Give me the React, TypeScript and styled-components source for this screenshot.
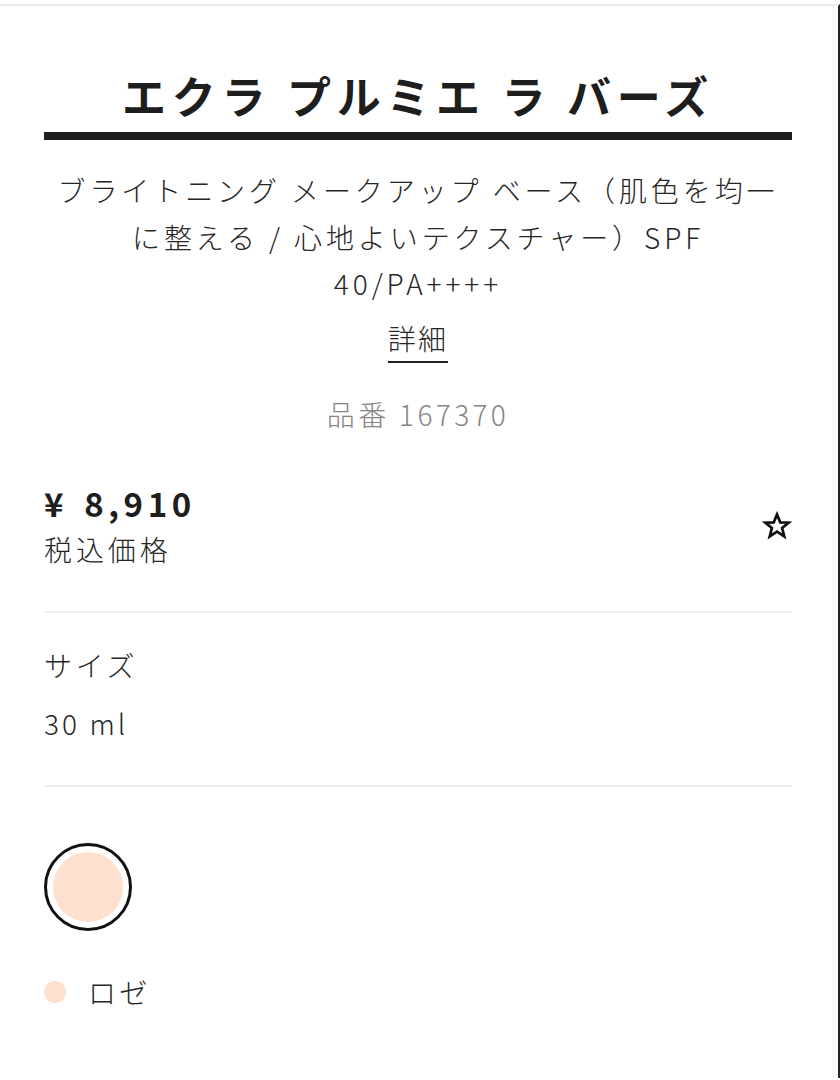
import React from "react";
import styled, {createGlobalStyle} from "styled-components";

const GlobalStyle = createGlobalStyle`
html, body {
margin: 0;
padding: 0;
background: #fff;
}
body {
font-family: "Noto Sans CJK JP", "Noto Sans", sans-serif;
color: #333;
}
`;

const product = {
    name: "エクラ プルミエ ラ バーズ",
    description: "ブライトニング メークアップ ベース（肌色を均一に整える / 心地よいテクスチャー）SPF 40/PA++++",
    code: "167370",
    price: "¥ 8,910",
    size: "30 ml",
    shade: {name: "ロゼ", color: "#fde0ce"},
};

const App: React.FC = () => {
    return <>
        <GlobalStyle/>
        <Page>
            <Sheet>
                <Title>{product.name}</Title>
                <Bar/>
                <Description>{product.description}</Description>
                <DetailRow>
                    <DetailLink href="#">詳細</DetailLink>
                </DetailRow>
                <Code>品番 {product.code}</Code>

                <PriceRow>
                    <div>
                        <Price>{product.price}</Price>
                        <TaxNote>税込価格</TaxNote>
                    </div>
                    <FavButton aria-label="お気に入り">
                        <svg width="30" height="30" viewBox="0 0 24 24" fill="none" stroke="#111" strokeWidth="2.2" strokeLinejoin="miter">
                            <polygon points="12,2.8 14.6,9.1 21.3,9.4 16.1,13.6 17.8,20.3 12,16.5 6.2,20.3 7.9,13.6 2.7,9.4 9.4,9.1"/>
                        </svg>
                    </FavButton>
                </PriceRow>
                <Divider/>

                <SizeBlock>
                    <Label>サイズ</Label>
                    <Value>{product.size}</Value>
                </SizeBlock>
                <Divider/>

                <ShadeBlock>
                    <Swatch selected color={product.shade.color}/>
                    <ShadeName>
                        <Dot color={product.shade.color}/>
                        {product.shade.name}
                    </ShadeName>
                </ShadeBlock>
            </Sheet>
        </Page>
    </>;
};

const Page = styled.div`
padding-top: 4px;
min-height: 1080px;
box-sizing: border-box;
`;
const Sheet = styled.div`
border-top: 2px solid #ebebeb;
border-right: 2px solid #222;
box-shadow: inset -4px 0 0 #fff, inset -5px 0 0 #f2f2f2;
min-height: 1074px;
box-sizing: border-box;
padding: 0 46px 40px 44px;
`;
const Title = styled.h1`
margin: 58px 0 6px;
text-align: center;
font-size: 44px;
line-height: 62px;
font-weight: 700;
letter-spacing: 0.13em;
color: #1e1e1e;
`;
const Bar = styled.div`
height: 8px;
background: #1e1e1e;
`;
const Description = styled.p`
margin: 27px 0 0;
text-align: center;
font-size: 28px;
line-height: 46.5px;
font-weight: 300;
letter-spacing: 0.14em;
color: #262626;
`;
const DetailRow = styled.div`
margin-top: 11px;
text-align: center;
`;
const DetailLink = styled.a`
display: inline-block;
font-size: 28px;
line-height: 40px;
font-weight: 300;
letter-spacing: 0.08em;
padding-bottom: 3px;
color: #262626;
text-decoration: none;
border-bottom: 2px solid #222;
`;
const Code = styled.div`
margin-top: 31px;
text-align: center;
font-size: 28px;
line-height: 40px;
font-weight: 300;
letter-spacing: 0.12em;
color: #858585;
`;
const PriceRow = styled.div`
margin-top: 49px;
display: flex;
align-items: center;
justify-content: space-between;
`;
const Price = styled.div`
font-size: 33px;
line-height: 40px;
font-weight: 700;
letter-spacing: 0.14em;
word-spacing: 0.12em;
color: #1e1e1e;
`;
const TaxNote = styled.div`
margin-top: 6px;
font-size: 28px;
line-height: 40px;
font-weight: 300;
letter-spacing: 0.14em;
color: #262626;
`;
const FavButton = styled.button`
border: 0;
background: none;
padding: 0;
margin-right: 0;
display: flex;
`;
const Divider = styled.hr`
margin: 42px 0 0;
border: 0;
height: 2px;
background: #ededed;
`;
const SizeBlock = styled.div`
margin-top: 32px;
`;
const Label = styled.div`
font-size: 28px;
line-height: 40px;
font-weight: 300;
letter-spacing: 0.13em;
color: #262626;
`;
const Value = styled.div`
margin-top: 18px;
font-size: 28px;
line-height: 40px;
font-weight: 300;
letter-spacing: 0.11em;
color: #262626;
`;
const ShadeBlock = styled.div`
margin-top: 56px;
`;
const Swatch = styled.div<{ color: string, selected?: boolean }>`
width: 88px;
height: 88px;
box-sizing: border-box;
border-radius: 50%;
border: 3px solid ${p => p.selected ? "#111" : "transparent"};
padding: 6px;
background: ${p => p.color};
background-clip: content-box;
`;
const ShadeName = styled.div`
margin-top: 41px;
display: flex;
align-items: center;
gap: 22px;
font-size: 28px;
line-height: 40px;
font-weight: 300;
letter-spacing: 0.12em;
color: #262626;
`;
const Dot = styled.span<{ color: string }>`
width: 22px;
height: 22px;
border-radius: 50%;
background: ${p => p.color};
`;

export default App;
